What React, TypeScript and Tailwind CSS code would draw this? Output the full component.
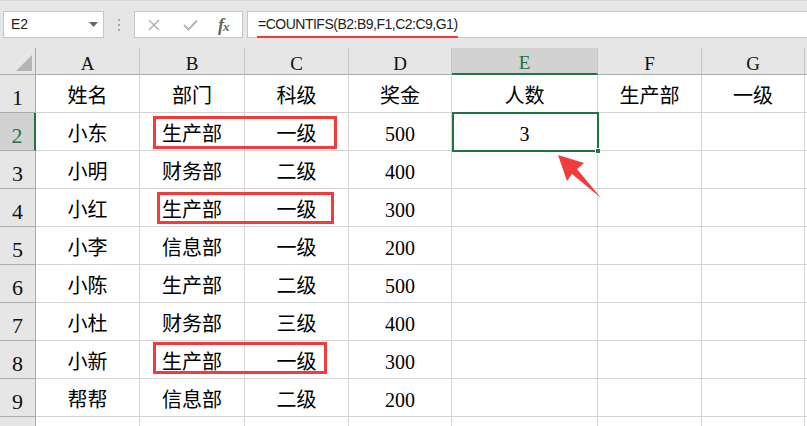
import React from 'react';

const cols = ['A', 'B', 'C', 'D', 'E', 'F', 'G'];

const rows: string[][] = [
  ['姓名', '部门', '科级', '奖金', '人数', '生产部', '一级'],
  ['小东', '生产部', '一级', '500', '3', '', ''],
  ['小明', '财务部', '二级', '400', '', '', ''],
  ['小红', '生产部', '一级', '300', '', '', ''],
  ['小李', '信息部', '一级', '200', '', '', ''],
  ['小陈', '生产部', '二级', '500', '', '', ''],
  ['小杜', '财务部', '三级', '400', '', '', ''],
  ['小新', '生产部', '一级', '300', '', '', ''],
  ['帮帮', '信息部', '二级', '200', '', '', ''],
  ['', '', '', '', '', '', ''],
];

const serif = { fontFamily: '"Liberation Serif", "Noto Sans CJK SC", serif' };

function Toolbar() {
  return (
    <div className="h-[48px] border-t border-[#d6d6d6] flex items-start pt-[10px] pl-[3px]">
      {/* name box */}
      <div className="w-[101px] h-[27px] bg-white border border-[#c6c6c6] flex items-center pl-[7px] pr-[5px]">
        <span className="flex-1 text-[14px] text-[#222]" style={{ fontFamily: '"Liberation Sans", sans-serif' }}>
          E2
        </span>
        <svg width="9" height="5" viewBox="0 0 9 5">
          <polygon points="0,0 9,0 4.5,5" fill="#666" />
        </svg>
      </div>
      <div className="w-[30px] h-[27px] flex flex-col items-center justify-center gap-[3px]">
        <span className="w-[2px] h-[2px] bg-[#a8a8a8]" />
        <span className="w-[2px] h-[2px] bg-[#a8a8a8]" />
        <span className="w-[2px] h-[2px] bg-[#a8a8a8]" />
      </div>
      {/* cancel / enter / fx */}
      <div className="w-[109px] h-[27px] bg-white border border-[#c6c6c6] flex items-center">
        <svg width="12" height="12" viewBox="0 0 12 12" className="ml-[13px]">
          <path d="M1 1 L11 11 M11 1 L1 11" stroke="#b5b5b5" strokeWidth="1.6" />
        </svg>
        <svg width="15" height="12" viewBox="0 0 15 12" className="ml-[23px]">
          <path d="M1 6 L5.5 10.5 L14 1.5" stroke="#b5b5b5" strokeWidth="2" fill="none" />
        </svg>
        <span
          className="ml-[20px] text-[18px] italic font-bold text-[#666] leading-none tracking-[-1px]"
          style={{ fontFamily: '"Liberation Serif", serif' }}
        >
          f<span className="text-[13px]">x</span>
        </span>
      </div>
      {/* formula */}
      <div className="ml-[4px] flex-1 h-[27px] bg-white border border-r-0 border-[#c6c6c6] flex items-center pl-[10px]">
        <span
          className="relative text-[14px] text-[#222] tracking-[-0.5px]"
          style={{ fontFamily: '"Liberation Sans", sans-serif' }}
        >
          =COUNTIFS(B2:B9,F1,C2:C9,G1)
          <span className="absolute left-[-1px] right-[0px] bottom-[-3px] h-[2px] bg-[#f03a3a]" />
        </span>
      </div>
    </div>
  );
}

function Grid() {
  return (
    <div
      className="grid grid-cols-[36px_104px_105px_104px_103px_146px_104px_103px_1fr] grid-rows-[27px_repeat(10,38px)]"
      style={serif}
    >
      {/* corner */}
      <div className="relative border-r border-b border-[#ababab] bg-[#e6e6e6]">
        <svg width="16" height="16" viewBox="0 0 16 16" className="absolute right-[3px] bottom-[3px]">
          <polygon points="16,0 16,16 0,16" fill="#b4b4b4" />
        </svg>
      </div>
      {cols.map((c) => (
        <div
          key={c}
          className={
            c === 'E'
              ? 'flex items-center justify-center pt-[4px] text-[19px] leading-none bg-[#d2d2d2] text-[#217346] border-r border-[#c6c6c6] border-b-2 border-b-[#217346]'
              : 'flex items-center justify-center pt-[4px] text-[19px] leading-none bg-[#e6e6e6] text-[#111] border-r border-[#c6c6c6] border-b border-b-[#ababab]'
          }
        >
          {c}
        </div>
      ))}
      <div className="bg-[#e6e6e6] border-b border-[#ababab]" />

      {rows.map((r, i) => (
        <React.Fragment key={i}>
          <div
            className={
              i === 1
                ? 'flex items-end justify-center pb-[3px] text-[22px] leading-none bg-[#d2d2d2] text-[#217346] border-b border-[#ababab] border-r-2 border-r-[#217346]'
                : 'flex items-end justify-center pb-[3px] text-[22px] leading-none bg-[#e6e6e6] text-[#111] border-b border-[#ababab] border-r border-r-[#ababab]'
            }
          >
            {i < 9 ? i + 1 : ''}
          </div>
          {r.map((v, j) => (
            <div
              key={j}
              className="flex items-center justify-center pt-[5px] bg-white text-[20px] leading-none text-black border-r border-b border-[#d4d4d4]"
            >
              {v}
            </div>
          ))}
          <div className="bg-white border-b border-[#d4d4d4]" />
        </React.Fragment>
      ))}
    </div>
  );
}

export default function App() {
  return (
    <div className="relative w-[807px] h-[426px] overflow-hidden bg-[#e6e6e6]">
      <Toolbar />
      <Grid />

      {/* active cell E2 */}
      <div className="absolute left-[452px] top-[112px] w-[147px] h-[40px] border-2 border-[#217346]" />
      <div className="absolute left-[595px] top-[148px] w-[6px] h-[6px] bg-[#217346] border border-white" />

      {/* red highlight boxes */}
      <div className="absolute left-[153px] top-[116px] w-[184px] h-[33px] border-[3px] border-[#f23c3c]" />
      <div className="absolute left-[157px] top-[192px] w-[177px] h-[32px] border-[3px] border-[#f23c3c]" />
      <div className="absolute left-[153px] top-[342px] w-[174px] h-[32px] border-[3px] border-[#f23c3c]" />

      {/* arrow */}
      <svg className="absolute left-0 top-0" width="807" height="426" viewBox="0 0 807 426">
        <polygon points="558,155 584,163 577,169 601,198 572,174 567,181" fill="#f23c3c" />
      </svg>
    </div>
  );
}
